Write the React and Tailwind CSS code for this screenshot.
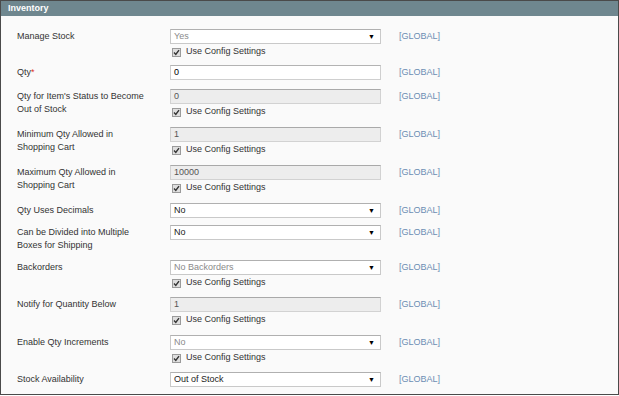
import React from 'react'

const rows = [
  { label: ['Manage Stock'], type: 'select', value: 'Yes', muted: true, config: true, mb: 'mb-[6px]' },
  { label: ['Qty'], required: true, type: 'input', value: '0', mb: 'mb-[9px]' },
  { label: ["Qty for Item's Status to Become", 'Out of Stock'], type: 'disabled', value: '0', config: true, mb: 'mb-[8px]' },
  { label: ['Minimum Qty Allowed in', 'Shopping Cart'], type: 'disabled', value: '1', config: true, mb: 'mb-[8px]' },
  { label: ['Maximum Qty Allowed in', 'Shopping Cart'], type: 'disabled', value: '10000', config: true, mb: 'mb-[8px]' },
  { label: ['Qty Uses Decimals'], type: 'select', value: 'No', mb: 'mb-[7px]' },
  { label: ['Can be Divided into Multiple', 'Boxes for Shipping'], type: 'select', value: 'No', mb: 'mb-[8px]' },
  { label: ['Backorders'], type: 'select', value: 'No Backorders', muted: true, config: true, mb: 'mb-[7px]' },
  { label: ['Notify for Quantity Below'], type: 'disabled', value: '1', config: true, mb: 'mb-[8px]' },
  { label: ['Enable Qty Increments'], type: 'select', value: 'No', muted: true, config: true, mb: 'mb-[7px]' },
  { label: ['Stock Availability'], type: 'select', value: 'Out of Stock', mb: 'mb-0' },
]

function Field({ row }) {
  if (row.type === 'select') {
    return (
      <div className="flex h-[15px] items-center justify-between border border-[#c9c9c9] border-t-[#b0b0b0] bg-white pl-[3px] pr-[5px]">
        <span className={row.muted ? 'text-[#8a8a8a]' : 'text-[#222]'}>{row.value}</span>
        <span className="text-[7px] leading-none text-black">▼</span>
      </div>
    )
  }
  if (row.type === 'disabled') {
    return (
      <div className="flex h-[15px] items-center border border-[#d2d2d2] border-t-[#a9a9a9] bg-[#ededed] pl-[3px] text-[#555]">
        {row.value}
      </div>
    )
  }
  return (
    <div className="flex h-[15px] items-center border border-[#cfcfcf] border-t-[#b3b3b3] bg-white pl-[3px] text-black">
      {row.value}
    </div>
  )
}

function ConfigCheck() {
  return (
    <div className="mt-[1px] flex h-[14px] items-center gap-[5px] pl-[2px] text-[#333]">
      <span className="flex h-[9px] w-[9px] items-center justify-center border border-[#9a9a9a] bg-[#dedede]">
        <svg width="7" height="7" viewBox="0 0 7 7">
          <path d="M1 3.6 L2.8 5.4 L6 1.2" fill="none" stroke="#333" strokeWidth="1.4" />
        </svg>
      </span>
      <span>Use Config Settings</span>
    </div>
  )
}

export default function App() {
  return (
    <div className="h-[395px] w-[619px] border border-[#4a4a4a] bg-[#fafafa] font-['Liberation_Sans',Arial,sans-serif] text-[9px]">
      <div className="flex h-[15px] items-center bg-[#6f878f] pl-[7px] font-bold text-white">Inventory</div>
      <div className="pl-[16px] pt-[13px]">
        {rows.map((row, i) => (
          <div key={i} className={`flex items-start ${row.mb}`}>
            <div className="mt-[1px] w-[153px] leading-[13px] text-[#333]">
              {row.label.map((line, j) => (
                <div key={j}>
                  {line}
                  {row.required ? <span className="text-[#e0321c]">*</span> : null}
                </div>
              ))}
            </div>
            <div className="w-[211px]">
              <Field row={row} />
              {row.config ? <ConfigCheck /> : null}
            </div>
            <div className="ml-[18px] leading-[15px] text-[#6b8db3]">[GLOBAL]</div>
          </div>
        ))}
      </div>
    </div>
  )
}
